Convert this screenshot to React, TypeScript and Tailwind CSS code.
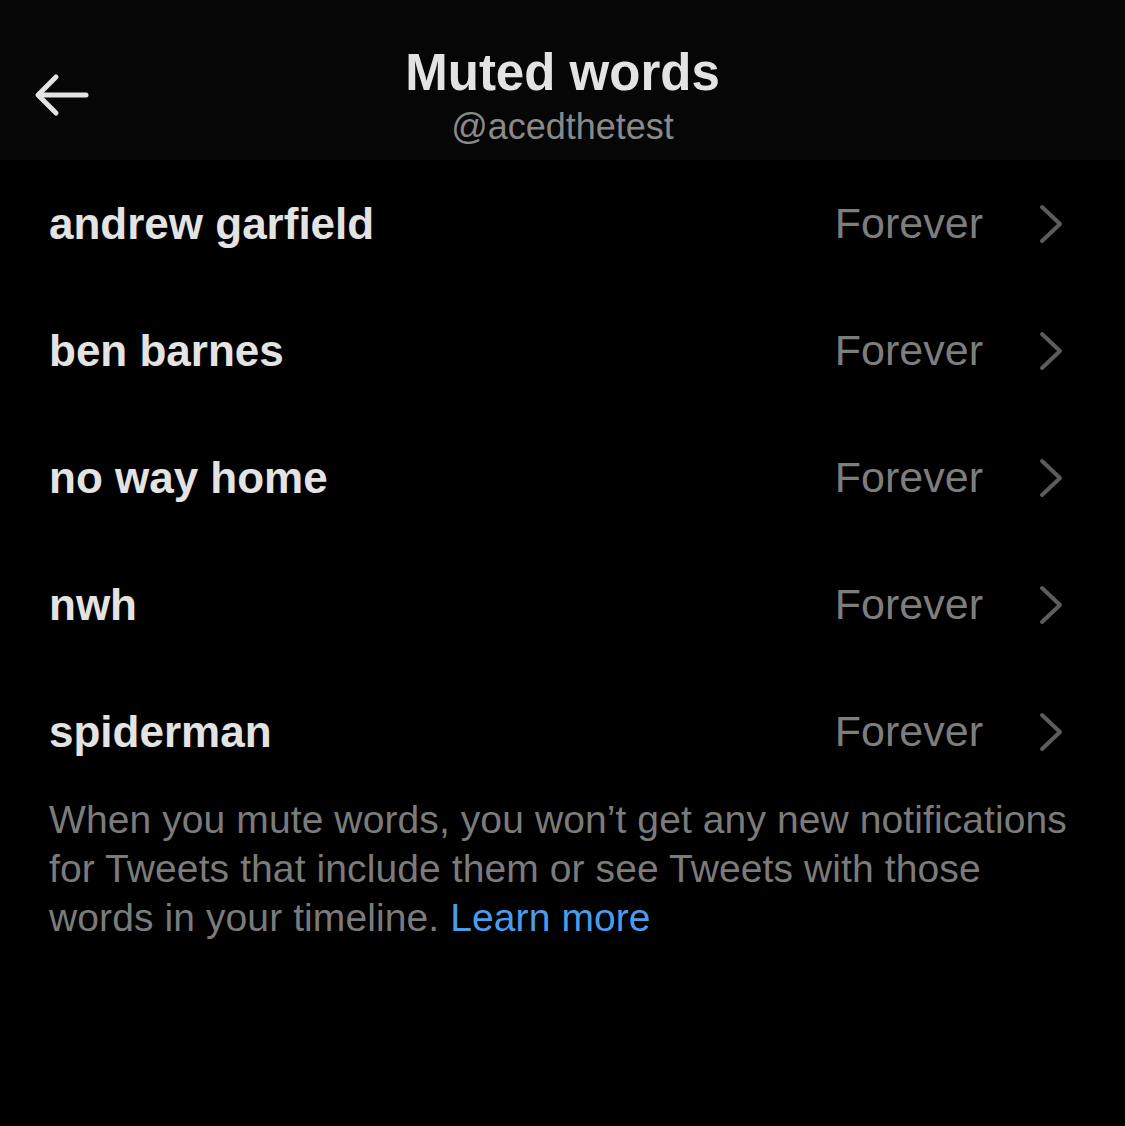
const words = ['andrew garfield', 'ben barnes', 'no way home', 'nwh', 'spiderman'];

const App = () => {
  return (
    <div className="w-[1125px] h-[1126px] bg-black font-['Liberation_Sans',Arial,sans-serif] overflow-hidden">
      <header className="relative h-[160px] bg-[#060606] flex flex-col items-center">
        <button className="absolute left-[34px] top-[72px] text-[#e4e4e4]">
          <svg width="56" height="46" viewBox="0 0 56 46" fill="none" stroke="currentColor" strokeWidth="5" strokeLinecap="round" strokeLinejoin="round">
            <path d="M52 23H5" />
            <path d="M22 5L4 23L22 41" />
          </svg>
        </button>
        <h1 className="mt-[43px] text-[51px] leading-[60px] font-bold text-[#e3e3e3]">Muted words</h1>
        <div className="mt-[2px] text-[36px] leading-[44px] text-[#8a8a8a]">@acedthetest</div>
      </header>

      <ul>
        {words.map((w) => (
          <li key={w} className="h-[127px] flex items-center pl-[49px] pr-[62px]">
            <span className="flex-1 text-[44px] font-bold text-[#e3e3e3]">{w}</span>
            <span className="text-[43px] text-[#7d7d7d]">Forever</span>
            <svg className="ml-[56px]" width="24" height="40" viewBox="0 0 24 40" fill="none" stroke="#5c5c5c" strokeWidth="4" strokeLinecap="round" strokeLinejoin="round">
              <path d="M3 3L21 20L3 37" />
            </svg>
          </li>
        ))}
      </ul>

      <p className="pl-[49px] pr-[40px] text-[39px] leading-[49px] tracking-[0.1px] text-[#7b7b7b]">
        When you mute words, you won’t get any new notifications for Tweets that include them or see Tweets with those words in your timeline.{' '}
        <a className="text-[#4b9de9]">Learn more</a>
      </p>
    </div>
  );
};

export default App;
